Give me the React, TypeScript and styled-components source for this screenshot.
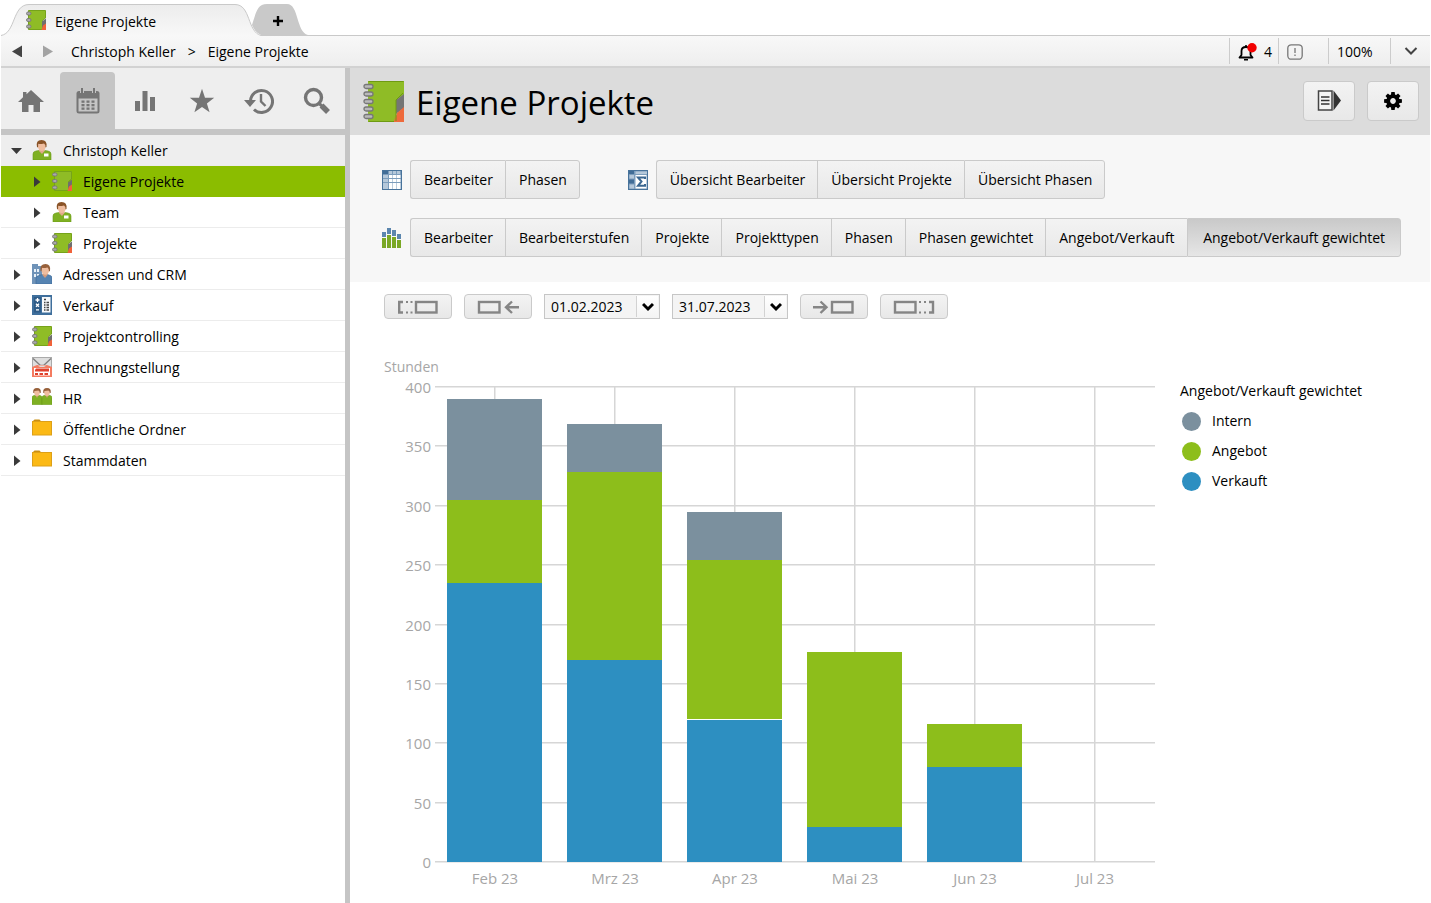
import React, { useState } from 'react';
import styled, { createGlobalStyle, css } from 'styled-components';

const GlobalStyle = createGlobalStyle`
  * { box-sizing: border-box; }
  body {
    margin: 0;
    background: #fff;
    color: #000;
    font-family: 'Open Sans', 'Noto Sans', sans-serif;
    font-size: 14px;
    line-height: 20px;
  }
  button, select { font: inherit; color: inherit; }
  button { margin: 0; padding: 0; border: 0; background: none; cursor: pointer; }
  svg { display: block; flex: none; }
`;

const Window = styled.div`
  display: flex;
  flex-direction: column;
  min-height: 100vh;
  padding: 0 1px;
`;

const Label = styled.span`
  padding-top: 2px;
`;

/* ---------- tabs ---------- */

const TabStrip = styled.div`
  display: flex;
  height: 36px;
  border-bottom: 1px solid #c9c9c9;
`;

const Tab = styled.button`
  position: relative;
  display: flex;
  align-items: center;
  gap: 9px;
  width: 260px;
  height: 36px;
  padding: 4px 0 0 25px;
  z-index: 1;
`;

const TabLabel = styled.span`
  padding-top: 4px;
`;

const NewTab = styled.button`
  position: relative;
  width: 57px;
  height: 35px;
  margin-left: -10px;
`;

const TabShape = styled.svg`
  position: absolute;
  inset: 0;
  z-index: -1;
`;

const PlusIcon = styled.svg`
  margin: 7px 0 0 22px;
`;

/* ---------- breadcrumb bar ---------- */

const PathBar = styled.div`
  display: flex;
  align-items: center;
  height: 32px;
  padding-left: 10px;
  border-bottom: 2px solid #d2d2d2;
  background: linear-gradient(#f8f8f8, #eeeeee);
`;

const HistoryButton = styled.button`
  width: 12px;
  margin-right: 18px;
`;

const Crumbs = styled.nav`
  display: flex;
  gap: 12px;
  flex: 1;
  padding-top: 2px;
  a { color: inherit; text-decoration: none; }
`;

const StatusItem = styled.button<{ $width: number }>`
  display: flex;
  align-items: center;
  gap: 7px;
  width: ${(p) => p.$width}px;
  height: 26px;
  padding: 2px 0 0 8px;
  border-left: 1px solid #cccccc;
`;

const MenuToggle = styled(StatusItem)`
  justify-content: center;
  padding: 0;
`;

/* ---------- body ---------- */

const Body = styled.div`
  display: flex;
  flex: 1;
`;

const Sidebar = styled.aside`
  width: 349px;
  flex: none;
  border-right: 5px solid #c5c5c5;
`;

const NavBar = styled.div`
  display: flex;
  gap: 2px;
  height: 67px;
  padding: 4px 2px 0;
  border-bottom: 6px solid #c5c5c5;
  background: #eeeeee;
`;

const NavButton = styled.button<{ $active?: boolean }>`
  display: flex;
  align-items: center;
  justify-content: center;
  width: 55px;
  height: 57px;
  border-radius: 4px 4px 0 0;
  color: #757575;
  ${(p) => p.$active && css`background: #c5c5c5;`}
`;

const Tree = styled.ul`
  margin: 0;
  padding: 0;
  list-style: none;
`;

const TreeRow = styled.button<{ $level: number; $tone: string }>`
  display: flex;
  align-items: center;
  width: 100%;
  height: 31px;
  padding-left: ${(p) => 9 + p.$level * 20}px;
  border-bottom: 1px solid ${(p) => (p.$tone === 'selected' ? '#8bbd00' : '#ececec')};
  background: ${(p) => (p.$tone === 'selected' ? '#8bbd00' : p.$tone === 'root' ? '#eeeeee' : '#fff')};
  svg:first-child { margin-right: 10px; }
  svg + svg { margin-right: 11px; }
`;

const Main = styled.main`
  flex: 1;
  min-width: 0;
`;

const TitleBar = styled.header`
  display: flex;
  align-items: flex-start;
  gap: 12px;
  height: 67px;
  padding: 13px 11px 0 13px;
  background: #dcdcdc;
`;

const Title = styled.h1`
  flex: 1;
  margin: 0;
  font-size: 33px;
  line-height: 43px;
  font-weight: 400;
`;

const raised = css`
  border: 1px solid #cacaca;
  background: linear-gradient(#f3f3f3, #e8e8e8);
`;

const ToolButton = styled.button`
  ${raised}
  display: flex;
  align-items: center;
  justify-content: center;
  width: 52px;
  height: 40px;
  border-radius: 4px;
`;

const Panel = styled.section`
  display: flex;
  flex-direction: column;
  gap: 19px;
  padding: 25px 28px 25px 32px;
  background: #f7f7f7;
`;

const PanelRow = styled.div`
  display: flex;
  gap: 48px;
`;

const ViewGroup = styled.div`
  display: flex;
  align-items: center;
  gap: 8px;
`;

const Segments = styled.div`
  display: flex;
`;

const Segment = styled.button<{ $active?: boolean }>`
  ${raised}
  height: 39px;
  padding: 0 12px 0 13px;
  border-right-width: 0;
  white-space: nowrap;
  &:first-child { border-radius: 3px 0 0 3px; }
  &:last-child { border-right-width: 1px; border-radius: 0 3px 3px 0; }
  ${(p) => p.$active && css`
    min-width: 214px;
    background: linear-gradient(#c9c9c9, #e6e6e6);
  `}
`;

const Report = styled.section`
  padding: 12px 34px 0;
`;

const RangeBar = styled.div`
  display: flex;
  gap: 12px;
`;

const RangeButton = styled.button`
  ${raised}
  display: flex;
  align-items: center;
  justify-content: center;
  width: 68px;
  height: 25px;
  border-radius: 4px;
`;

const DateField = styled.div`
  position: relative;
  width: 116px;
  height: 25px;
`;

const DateSelect = styled.select`
  appearance: none;
  width: 100%;
  height: 100%;
  padding: 0 0 0 6px;
  border: 1px solid #c6c6c6;
  border-radius: 0;
  background: #f4f4f4;
  line-height: 23px;
`;

const DateArrow = styled.span`
  position: absolute;
  top: 2px;
  right: 2px;
  bottom: 2px;
  display: flex;
  align-items: center;
  justify-content: center;
  width: 22px;
  border-left: 1px solid #d2d2d2;
  background: linear-gradient(#fff, #f4f4f4);
  pointer-events: none;
`;

const ChartArea = styled.div`
  display: flex;
  gap: 24px;
  padding-top: 36px;
`;

const AxisText = styled.text`
  fill: #a6a6a6;
  font-size: 15px;
`;

const AxisTitle = styled.text`
  fill: #a6a6a6;
  font-size: 14px;
`;

const Legend = styled.div`
  padding-top: 26px;
`;

const LegendList = styled.ul`
  margin: 0;
  padding: 5px 0 0 2px;
  list-style: none;
`;

const LegendItem = styled.li<{ $color: string }>`
  display: flex;
  align-items: center;
  gap: 11px;
  height: 30px;
  &::before {
    content: '';
    width: 19px;
    height: 19px;
    border-radius: 50%;
    background: ${(p) => p.$color};
  }
`;

/* ---------- icons ---------- */

const NotebookIcon = ({ size = 20 }: { size?: number }) => (
  <svg width={size} height={size} viewBox="0 0 41 41">
    <path d="M5 0H41V14L33 19V41H5Z" fill="#8fbc26" />
    <path d="M5.500 .5H40.500M5.500 40.500H33" stroke="#6e9a12" fill="none" />
    <path d="M41 13V27L33 33V19Z" fill="#757575" />
    <path d="M41 26V41H31V40L34 32Z" fill="#ee6a3c" />
    <path d="M33 40V19L40 12" stroke="#6e9a12" fill="none" />
    {[5.5, 13, 20.5, 28, 35.500].map((y) => (
      <rect key={y} x="1" y={y - 2} width="9" height="4" rx="2" fill="#b9b9b9" stroke="#777" strokeWidth="1.3" />
    ))}
  </svg>
);

const SmallNotebookIcon = () => (
  <svg width="20" height="20" viewBox="0 0 20 20">
    <path d="M2.500 .5H19.500V8L16.500 10.500V19.500H2.500Z" fill="#8fbc26" stroke="#76a31a" />
    <path d="M20 8.500V14L16 17.500V11.500Z" fill="#6f6f6f" />
    <path d="M20 13.500V20H15.500L17 15.500Z" fill="#f0623a" />
    {[3.5, 10, 16.500].map((y) => (
      <rect key={y} x=".5" y={y - 1.500} width="4.500" height="3" rx="1.500" fill="#a9a9a9" stroke="#777" strokeWidth=".9" />
    ))}
  </svg>
);

const PersonShape = ({ hair = '#8a5327' }: { hair?: string }) => (
  <>
    <path d="M1 20V14Q1 11.500 4 11L7 10.500L10 13L13 10.500L16 11Q19 11.500 19 14V20Z" fill="#7fb023" stroke="#6a9a16" strokeWidth=".6" />
    <path d="M7 9.500H12.500V11L10 14L7 11Z" fill="#e0a988" />
    <ellipse cx="9.800" cy="6.300" rx="3.900" ry="4.800" fill="#efbd9f" />
    <path d="M5 7Q3.500 0 9.500 0Q15.500 0 14.500 7L13.500 7.500Q13.800 4.500 12 3.500Q8 4.500 6.300 3.800L6 7.500Z" fill={hair} />
  </>
);

const PersonIcon = () => (
  <svg width="20" height="20" viewBox="0 0 20 20">
    <PersonShape />
    <rect x="12" y="13.500" width="4.500" height="3" fill="#fff" />
  </svg>
);

const CrmIcon = () => (
  <svg width="20" height="20" viewBox="0 0 20 20">
    <path d="M0 0H6V2H10V20H0Z" fill="#6f93b8" />
    <path d="M2 5h2v3H2zM5 5h2v3H5zM2 10h2v3H2zM5 10h2v2H5z" fill="#e8f0f7" />
    <path d="M4 20V14.500Q4 12 7 11.500L10.500 10.500L13 13L15.500 10.500L17 11Q20 11.500 20 14V20Z" fill="#5684b2" stroke="#3c6a98" strokeWidth=".6" />
    <path d="M10.500 9.500H15.500V11L13 14L10.500 11Z" fill="#d69c7c" />
    <ellipse cx="13.300" cy="6" rx="3.900" ry="4.800" fill="#efbd9f" />
    <path d="M8.500 7Q7.500 0 13.500 0Q19 0 18 7L17 7.500Q17 4.500 15.500 3.500Q11.500 4.500 10 3.800L9.500 7.500Z" fill="#97603a" />
  </svg>
);

const SalesIcon = () => (
  <svg width="20" height="20" viewBox="0 0 20 20">
    <rect width="20" height="20" fill="#3f6f9c" />
    <rect x="2" y="2" width="7" height="15.500" fill="#2f5c88" />
    <rect x="10" y="2" width="8.500" height="15.500" fill="#f7f9fb" />
    <path d="M12 4.500h2M12 7.500h1.500M14.500 7.500h2.500M12 10h1.500M14.500 10h2.500M12 12.500h1.500M14.500 12.500h2.500M12 15h1.500M14.500 15h2.500" stroke="#444" strokeWidth="1.300" />
    <path d="M3.500 5h4M5.500 3v4M4 8.800l3 3M7 8.800l-3 3M4 14.800h3" stroke="#fff" strokeWidth="1.300" />
  </svg>
);

const InvoiceIcon = () => (
  <svg width="20" height="20" viewBox="0 0 20 20">
    <rect x=".5" y=".5" width="19" height="10" fill="#dedede" stroke="#aaa" />
    <path d="M1 1.500L8.500 8.500H11.500L19 1.500" fill="none" stroke="#808080" strokeWidth="1.300" />
    <path d="M0 10L5 8H15L20 10V20H0Z" fill="#f47b60" />
    <path d="M5.500 8.500L8 10H12L14.500 8.500" fill="#dedede" />
    <rect x="2" y="11" width="16" height="7.500" fill="#fff" />
    <path d="M4 11.500H17V14.500H3V13ZM3 16H6V18H3ZM7.500 16H11V18H7.500ZM12.500 16H16V18H12.500Z" fill="#e0412c" />
  </svg>
);

const TeamIcon = () => (
  <svg width="20" height="20" viewBox="0 0 20 20">
    {[0, 10].map((x) => (
      <g key={x} transform={`translate(${x} 0)`}>
        <path d="M0 16.500V9.500Q0 8 2 7.500H8Q10 8 10 9.500V16.500Z" fill="#7fb023" stroke="#6a9a16" strokeWidth=".6" />
        <path d="M3.500 7H6.500L5 10Z" fill="#d69c7c" />
        <ellipse cx="5" cy="4.500" rx="2.800" ry="3.500" fill="#efbd9f" />
        <path d="M1.300 5Q.5 0 5 0Q9.500 0 8.700 5L7.800 5Q7.800 3 6.500 2.500L2.500 3L2.200 5Z" fill="#97603a" />
      </g>
    ))}
  </svg>
);

const FolderIcon = () => (
  <svg width="20" height="20" viewBox="0 0 20 20">
    <path d="M1.500 4V1.500L2.500 .5H7.500L8.800 2V4Z" fill="#c98f12" />
    <rect x=".5" y="2.500" width="19" height="13.500" fill="#fbb915" stroke="#dda018" />
  </svg>
);

const Expander = ({ open }: { open?: boolean }) => (
  <svg width="12" height="12" viewBox="0 0 12 12" fill="#3a3a3a">
    {open ? <path d="M1 4H12L6.500 10Z" /> : <path d="M4 1.500L10.500 7L4 12Z" />}
  </svg>
);

const GridShape = ({ children }: { children?: React.ReactNode }) => (
  <svg width="20" height="20" viewBox="0 0 20 20">
    <rect x=".5" y=".5" width="19" height="19" fill="#7c9dbc" stroke="#48739b" />
    {children}
  </svg>
);

const TableIcon = () => (
  <GridShape>
    <rect x="1" y="1" width="5" height="3" fill="#416d97" />
    {[7, 11, 15].map((x) => <rect key={x} x={x} y="1" width="3" height="3" fill="#b5c8da" />)}
    {[5, 9, 13, 16].map((y) => (
      <React.Fragment key={y}>
        <rect x="1" y={y} width="5" height="3" fill="#b5c8da" />
        {[7, 11, 15].map((x) => <rect key={x} x={x} y={y} width="3.500" height="3" fill="#fff" />)}
      </React.Fragment>
    ))}
  </GridShape>
);

const SumIcon = () => (
  <GridShape>
    <rect x="1" y="1" width="5" height="3" fill="#416d97" />
    <path d="M7.500 1.500H19V4H7.500ZM1.500 5H6V8.500H1.500ZM1.500 14.500H6V18.500H1.500Z" fill="#b5c8da" />
    <rect x="1" y="9.500" width="5" height="4" fill="#416d97" />
    <rect x="7.500" y="5" width="11" height="13.500" fill="#fff" />
    <path d="M17 9V7.500H10L13.500 11.500L10 15.800H17V14" fill="none" stroke="#3b6791" strokeWidth="2" />
  </GridShape>
);

const StackedBarsIcon = () => (
  <svg width="20" height="20" viewBox="0 0 20 20">
    {[[0, 4, 10], [5, 0, 7], [10, 2, 9], [15, 6, 12]].map(([x, top, mid]) => (
      <React.Fragment key={x}>
        <rect x={x} y={top} width="4" height={mid - top - 1} fill="#5b86ae" />
        <rect x={x} y={mid} width="4" height={20 - mid} fill="#7aa825" />
      </React.Fragment>
    ))}
  </svg>
);

const HomeIcon = () => (
  <svg width="26" height="26" viewBox="0 0 26 26" fill="currentColor">
    <path d="M13 2L26 14H22V24H15.500V17H10.500V24H4V14H0L5 9.300V4H8.500V6.200Z" />
  </svg>
);

const CalendarIcon = () => (
  <svg width="26" height="26" viewBox="0 0 26 26">
    <path d="M4 3H22Q24.500 3 24.500 5.500V23Q24.500 25.500 22 25.500H4Q1.500 25.500 1.500 23V5.500Q1.500 3 4 3Z" fill="currentColor" />
    <path d="M3.500 10.500H22.500V23.500H3.500Z" fill="#c5c5c5" />
    <path d="M7 0V5M19 0V5" stroke="#c5c5c5" strokeWidth="4" />
    <path d="M7 0V5M19 0V5" stroke="currentColor" strokeWidth="2" />
    {[12.5, 16, 19.500].map((y) => [6.5, 11.5, 16.500].map((x) => (
      <rect key={`${x}-${y}`} x={x} y={y} width="3" height="2.300" fill="currentColor" />
    )))}
  </svg>
);

const BarsIcon = () => (
  <svg width="26" height="26" viewBox="0 0 26 26" fill="currentColor">
    <path d="M3 13H8V23H3ZM10.500 3H15.500V23H10.500ZM18 9H23V23H18Z" />
  </svg>
);

const StarIcon = () => (
  <svg width="26" height="26" viewBox="0 0 26 26" fill="currentColor">
    <path d="M13 .8L16 9.700L25.200 9.800L17.900 15.400L20.600 24.300L13 19L5.400 24.300L8.100 15.400L.8 9.800L10 9.700Z" />
  </svg>
);

const ClockBackIcon = () => (
  <svg width="30" height="28" viewBox="0 0 30 28" fill="none" stroke="currentColor">
    <path d="M6.500 14A11 11 0 1 1 10 22.500" strokeWidth="3" />
    <path d="M0 13H12L6 20Z" fill="currentColor" stroke="none" />
    <path d="M17 7V14.500L21.500 19" strokeWidth="2.400" />
  </svg>
);

const SearchIcon = () => (
  <svg width="28" height="28" viewBox="0 0 28 28" fill="none" stroke="currentColor">
    <circle cx="11.500" cy="10.500" r="8" strokeWidth="3.400" />
    <path d="M17 16.500L20 19" strokeWidth="3" />
    <path d="M19.500 18.500L26 25" strokeWidth="5.500" />
  </svg>
);

const BellIcon = () => (
  <svg width="19" height="19" viewBox="0 0 19 19">
    <path d="M1.500 14.500H14.500L12.500 12V8Q12.500 4 8 4Q3.500 4 3.500 8V12Z" fill="none" stroke="#000" strokeWidth="1.800" strokeLinejoin="round" />
    <path d="M8 2V4M6 16.800H10" stroke="#000" strokeWidth="1.600" />
    <circle cx="14" cy="4.700" r="4.700" fill="#f20000" />
  </svg>
);

const AlertIcon = () => (
  <svg width="16" height="16" viewBox="0 0 16 16" fill="none" stroke="#777">
    <rect x=".8" y=".8" width="14.400" height="14.400" rx="3.500" strokeWidth="1.300" />
    <path d="M8 4V9M8 10.500V12" strokeWidth="1.300" />
  </svg>
);

const ChevronIcon = ({ color, width }: { color: string; width: number }) => (
  <svg width="14" height="10" viewBox="0 0 14 10" fill="none" stroke={color} strokeWidth={width}>
    <path d="M1.500 2L7 7.500L12.500 2" />
  </svg>
);

const DateChevron = () => (
  <svg width="12" height="10" viewBox="0 0 12 10" fill="none" stroke="#000" strokeWidth="3">
    <path d="M1 2L6 7L11 2" />
  </svg>
);

const ExportIcon = () => (
  <svg width="24" height="22" viewBox="0 0 24 22">
    <rect x="1.500" y="1" width="13.500" height="19" fill="#f4f4f4" stroke="#444" strokeWidth="1.500" />
    <path d="M4 7H12.500M4 10.500H12.500M4 14H12.500" stroke="#333" strokeWidth="1.500" />
    <path d="M16.500 .5L24 10.500L16.500 20.500Z" fill="#333" />
  </svg>
);

const GearIcon = () => (
  <svg width="18" height="18" viewBox="-9 -9 18 18">
    {[0, 45, 90, 135, 180, 225, 270, 315].map((a) => (
      <path key={a} d="M-2.200 -5L-1.700 -8.900H1.700L2.200 -5Z" transform={`rotate(${a})`} />
    ))}
    <circle r="4.800" fill="none" stroke="#000" strokeWidth="3.800" />
  </svg>
);

const RangeIcon = ({ kind }: { kind: 'growLeft' | 'shrinkRight' | 'shrinkLeft' | 'growRight' }) => {
  const boxX = kind === 'growLeft' || kind === 'shrinkLeft' ? 19 : 2;
  return (
    <svg width="42" height="14" viewBox="0 0 42 14" fill="none" stroke="#858585" strokeWidth="2.400">
      <rect x={boxX} y="2" width="20.500" height="10.500" />
      {kind === 'growLeft' && (
        <>
          <path d="M6 2H2.200V12.500H6" />
          <path d="M9 2h2M13.500 2h2M9 12.500h2M13.500 12.500h2" strokeWidth="2" />
        </>
      )}
      {kind === 'growRight' && (
        <>
          <path d="M36 2H40V12.500H36" />
          <path d="M26 2h2M31 2h2M26 12.500h2M31 12.500h2" strokeWidth="2" />
        </>
      )}
      {kind === 'shrinkRight' && <path d="M42 7.200H29M35 1.500L29 7.200L35 13" />}
      {kind === 'shrinkLeft' && <path d="M0 7.200H13M7.500 1.500L13.500 7.200L7.500 13" />}
    </svg>
  );
};

/* ---------- data ---------- */

const navItems = [
  { label: 'Start', icon: <HomeIcon /> },
  { label: 'Kalender', icon: <CalendarIcon /> },
  { label: 'Auswertungen', icon: <BarsIcon /> },
  { label: 'Favoriten', icon: <StarIcon /> },
  { label: 'Verlauf', icon: <ClockBackIcon /> },
  { label: 'Suche', icon: <SearchIcon /> },
];

const treeItems = [
  { label: 'Christoph Keller', icon: <PersonIcon />, level: 0, tone: 'root' },
  { label: 'Eigene Projekte', icon: <SmallNotebookIcon />, level: 1, tone: 'selected' },
  { label: 'Team', icon: <PersonIcon />, level: 1, tone: 'plain' },
  { label: 'Projekte', icon: <SmallNotebookIcon />, level: 1, tone: 'plain' },
  { label: 'Adressen und CRM', icon: <CrmIcon />, level: 0, tone: 'plain' },
  { label: 'Verkauf', icon: <SalesIcon />, level: 0, tone: 'plain' },
  { label: 'Projektcontrolling', icon: <SmallNotebookIcon />, level: 0, tone: 'plain' },
  { label: 'Rechnungstellung', icon: <InvoiceIcon />, level: 0, tone: 'plain' },
  { label: 'HR', icon: <TeamIcon />, level: 0, tone: 'plain' },
  { label: 'Öffentliche Ordner', icon: <FolderIcon />, level: 0, tone: 'plain' },
  { label: 'Stammdaten', icon: <FolderIcon />, level: 0, tone: 'plain' },
];

const tableViews = ['Bearbeiter', 'Phasen'];
const summaryViews = ['Übersicht Bearbeiter', 'Übersicht Projekte', 'Übersicht Phasen'];
const chartViews = [
  'Bearbeiter', 'Bearbeiterstufen', 'Projekte', 'Projekttypen', 'Phasen',
  'Phasen gewichtet', 'Angebot/Verkauft', 'Angebot/Verkauft gewichtet',
];

const series = [
  { name: 'Intern', color: '#7b909e' },
  { name: 'Angebot', color: '#8dbe1b' },
  { name: 'Verkauft', color: '#2d8fc1' },
];

const months = [
  { label: 'Feb 23', sold: 235, offered: 70, internal: 85, seam: 0 },
  { label: 'Mrz 23', sold: 170, offered: 158.5, internal: 40.5, seam: 0 },
  { label: 'Apr 23', sold: 120, offered: 134.5, internal: 40.5, seam: 1 },
  { label: 'Mai 23', sold: 29.5, offered: 147.5, internal: 0, seam: 0 },
  { label: 'Jun 23', sold: 80, offered: 36, internal: 0, seam: 0 },
  { label: 'Jul 23', sold: 0, offered: 0, internal: 0, seam: 0 },
];

/* ---------- chart ---------- */

const PLOT = { left: 51, top: 32, width: 720, height: 475, max: 400, step: 120, bar: 95 };
const yOf = (value: number) => Math.round(PLOT.top + PLOT.height * (1 - value / PLOT.max));

const StackedChart = () => (
  <svg width="772" height="540" viewBox="0 0 772 540" role="img" aria-label="Stunden pro Monat">
    <AxisTitle x="0" y="17">Stunden</AxisTitle>
    {[0, 50, 100, 150, 200, 250, 300, 350, 400].map((v) => (
      <React.Fragment key={v}>
        <AxisText x="47" y={yOf(v) + 6} textAnchor="end">{v}</AxisText>
        <rect x={PLOT.left} y={yOf(v) - 1} width={PLOT.width} height="1.500" fill="#d6d6d6" />
      </React.Fragment>
    ))}
    {months.map((m, i) => {
      const center = PLOT.left + PLOT.step * (i + 0.5);
      const x = Math.floor(center - PLOT.bar / 2);
      const soldTop = yOf(m.sold);
      const offerTop = yOf(m.sold + m.offered);
      const internTop = yOf(m.sold + m.offered + m.internal);
      return (
        <React.Fragment key={m.label}>
          <rect x={center - 1} y={PLOT.top} width="1.500" height={PLOT.height} fill="#d6d6d6" />
          <rect x={x} y={internTop} width={PLOT.bar} height={offerTop - internTop} fill={series[0].color} />
          <rect x={x} y={offerTop} width={PLOT.bar} height={soldTop - offerTop - m.seam} fill={series[1].color} />
          <rect x={x} y={soldTop - m.seam} width={PLOT.bar} height={m.seam} fill="#fff" />
          <rect x={x} y={soldTop} width={PLOT.bar} height={PLOT.top + PLOT.height - soldTop} fill={series[2].color} />
          <AxisText x={center} y="529" textAnchor="middle">{m.label}</AxisText>
        </React.Fragment>
      );
    })}
  </svg>
);

const DatePicker = ({ label, value }: { label: string; value: string }) => (
  <DateField>
    <DateSelect aria-label={label} defaultValue={value}>
      <option>{value}</option>
    </DateSelect>
    <DateArrow><DateChevron /></DateArrow>
  </DateField>
);

const SegmentGroup = ({ icon, views, active, onPick }: {
  icon: React.ReactNode; views: string[]; active?: string; onPick?: (view: string) => void;
}) => (
  <ViewGroup>
    {icon}
    <Segments>
      {views.map((v) => (
        <Segment key={v} $active={v === active} onClick={() => onPick?.(v)}>{v}</Segment>
      ))}
    </Segments>
  </ViewGroup>
);

export default function App() {
  const [view, setView] = useState('Angebot/Verkauft gewichtet');
  return (
    <>
      <GlobalStyle />
      <Window>
        <TabStrip>
          <Tab>
            <TabShape width="260" height="36" viewBox="0 0 260 36">
              <defs>
                <linearGradient id="tab" x1="0" y1="0" x2="0" y2="1">
                  <stop offset="0" stopColor="#ececec" />
                  <stop offset="1" stopColor="#f8f8f8" />
                </linearGradient>
              </defs>
              <path d="M0 35.500C15 33 11 4.500 28 4.500H234C250 4.500 246 32 260 35.500V36H0Z" fill="url(#tab)" />
              <path d="M0 35.500C15 33 11 4.500 28 4.500H234C250 4.500 246 32 260 35.500" fill="none" stroke="#c9c9c9" />
            </TabShape>
            <SmallNotebookIcon />
            <TabLabel>Eigene Projekte</TabLabel>
          </Tab>
          <NewTab aria-label="Neuer Tab">
            <TabShape width="57" height="35" viewBox="0 0 57 35">
              <path d="M1 25C5 13 6 4 16 4H36C48 4 45 32 57 35H10C5 33 3 29 1 25Z" fill="#c9c9c9" />
            </TabShape>
            <PlusIcon width="10" height="10" viewBox="0 0 10 10" stroke="#000" strokeWidth="2.400">
              <path d="M5 0V10M0 5H10" />
            </PlusIcon>
          </NewTab>
        </TabStrip>

        <PathBar>
          <HistoryButton aria-label="Zurück">
            <svg width="12" height="12" viewBox="0 0 12 12"><path d="M1 6.500L11 .5V12.500Z" fill="#444" /></svg>
          </HistoryButton>
          <HistoryButton aria-label="Vorwärts">
            <svg width="12" height="12" viewBox="0 0 12 12"><path d="M2 .5L12 6.500L2 12.500Z" fill="#a3a3a3" /></svg>
          </HistoryButton>
          <Crumbs aria-label="Pfad">
            <a href="#keller">Christoph Keller</a>
            <span>&gt;</span>
            <a href="#projekte">Eigene Projekte</a>
          </Crumbs>
          <StatusItem $width={49}><BellIcon />4</StatusItem>
          <StatusItem $width={50} aria-label="Hinweise"><AlertIcon /></StatusItem>
          <StatusItem $width={62}>100%</StatusItem>
          <MenuToggle $width={40} aria-label="Mehr"><ChevronIcon color="#444" width={2} /></MenuToggle>
        </PathBar>

        <Body>
          <Sidebar>
            <NavBar>
              {navItems.map((n, i) => (
                <NavButton key={n.label} $active={i === 1} aria-label={n.label}>{n.icon}</NavButton>
              ))}
            </NavBar>
            <Tree>
              {treeItems.map((t) => (
                <li key={t.label}>
                  <TreeRow $level={t.level} $tone={t.tone}>
                    <Expander open={t.tone === 'root'} />
                    {t.icon}
                    <Label>{t.label}</Label>
                  </TreeRow>
                </li>
              ))}
            </Tree>
          </Sidebar>

          <Main>
            <TitleBar>
              <NotebookIcon size={41} />
              <Title>Eigene Projekte</Title>
              <ToolButton aria-label="Exportieren"><ExportIcon /></ToolButton>
              <ToolButton aria-label="Einstellungen"><GearIcon /></ToolButton>
            </TitleBar>

            <Panel>
              <PanelRow>
                <SegmentGroup icon={<TableIcon />} views={tableViews} />
                <SegmentGroup icon={<SumIcon />} views={summaryViews} />
              </PanelRow>
              <PanelRow>
                <SegmentGroup icon={<StackedBarsIcon />} views={chartViews} active={view} onPick={setView} />
              </PanelRow>
            </Panel>

            <Report>
              <RangeBar>
                <RangeButton aria-label="Beginn früher"><RangeIcon kind="growLeft" /></RangeButton>
                <RangeButton aria-label="Zeitraum zurück"><RangeIcon kind="shrinkRight" /></RangeButton>
                <DatePicker label="Von" value="01.02.2023" />
                <DatePicker label="Bis" value="31.07.2023" />
                <RangeButton aria-label="Zeitraum vor"><RangeIcon kind="shrinkLeft" /></RangeButton>
                <RangeButton aria-label="Ende später"><RangeIcon kind="growRight" /></RangeButton>
              </RangeBar>
              <ChartArea>
                <StackedChart />
                <Legend>
                  Angebot/Verkauft gewichtet
                  <LegendList>
                    {series.map((s) => <LegendItem key={s.name} $color={s.color}>{s.name}</LegendItem>)}
                  </LegendList>
                </Legend>
              </ChartArea>
            </Report>
          </Main>
        </Body>
      </Window>
    </>
  );
}
